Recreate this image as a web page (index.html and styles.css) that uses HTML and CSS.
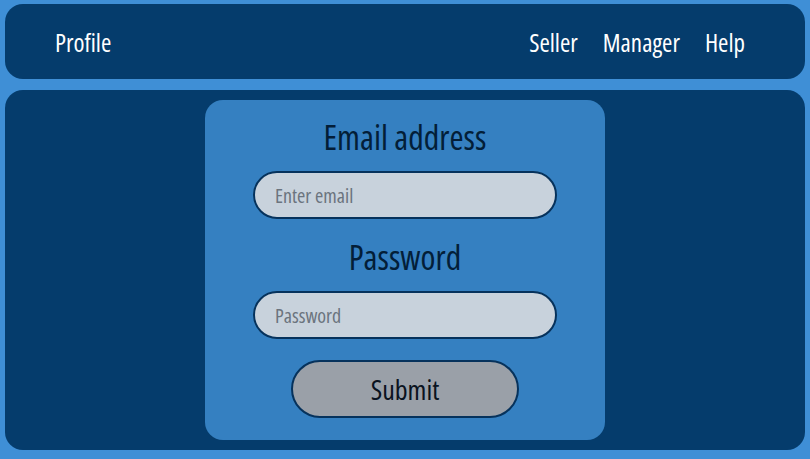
FILE: index.html
```html
<!DOCTYPE html>
<html>
<head>
<meta charset="utf-8">
<link rel="stylesheet" href="styles.css">
</head>
<body>
<nav class="nav">
  <a class="nav-link" href="#">Profile</a>
  <div class="nav-right">
    <a class="nav-link" href="#">Seller</a>
    <a class="nav-link" href="#">Manager</a>
    <a class="nav-link" href="#">Help</a>
  </div>
</nav>
<main class="main">
  <form class="card">
    <label class="label" for="email">Email address</label>
    <input class="field" id="email" type="email" placeholder="Enter email">
    <label class="label label-pw" for="pw">Password</label>
    <input class="field" id="pw" type="password" placeholder="Password">
    <button class="submit" type="button">Submit</button>
  </form>
</main>
</body>
</html>
```
FILE: styles.css
```css
* { box-sizing: border-box; }
html, body { margin: 0; }
body {
  background: #3f8fd6;
  padding: 4px 5px 9px;
  font-family: "Open Sans", "DejaVu Sans Condensed", sans-serif;
  font-stretch: 75%;
  height: 459px;
  overflow: hidden;
}
.nav {
  height: 75px;
  background: #053c6c;
  border-radius: 18px;
  display: flex;
  align-items: center;
  justify-content: space-between;
  padding: 0 60px 0 50px;
}
.nav-right { display: flex; gap: 25px; }
.nav-link {
  color: #ffffff;
  text-decoration: none;
  font-size: 25px;
  font-weight: 500;
  line-height: 30px;
}
.main {
  margin-top: 11px;
  height: 360px;
  background: #053c6c;
  border-radius: 18px;
  padding: 10px 0;
  display: flex;
  justify-content: center;
}
.card {
  width: 400px;
  height: 340px;
  background: #3580c1;
  border-radius: 18px;
  display: flex;
  flex-direction: column;
  align-items: center;
  padding-top: 17px;
}
.label {
  display: block;
  color: #031e38;
  font-size: 34px;
  font-weight: 500;
  line-height: 40px;
  height: 40px;
}
.label-pw { margin-top: 18px; }
.field {
  margin-top: 14px;
  width: 304px;
  height: 48px;
  border: 2px solid #06325c;
  border-radius: 24px;
  background: #c8d2dc;
  padding: 0 20px;
  font-family: inherit;
  font-stretch: inherit;
  font-size: 20px;
  font-weight: 500;
  color: #212529;
  outline: none;
}
.field::placeholder { color: #6b747e; }
.submit {
  margin-top: 21px;
  width: 228px;
  height: 58px;
  border: 2px solid #06325c;
  border-radius: 29px;
  background: #9aa0a8;
  color: #0a1320;
  font-family: inherit;
  font-stretch: inherit;
  font-size: 28px;
  font-weight: 500;
  padding: 0;
}
```
